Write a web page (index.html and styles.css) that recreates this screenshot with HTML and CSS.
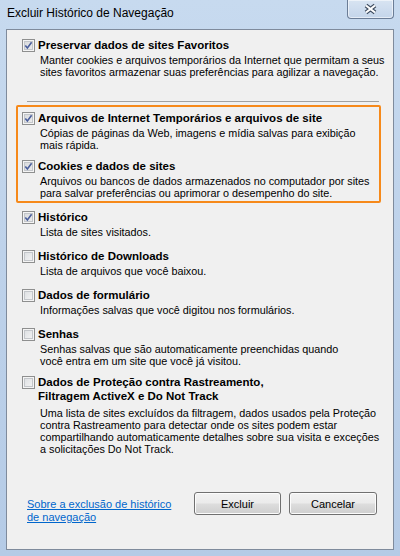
FILE: index.html
```html
<!DOCTYPE html>
<html lang="pt-BR">
<head>
    <meta charset="UTF-8">
    <meta name="viewport" content="width=device-width, initial-scale=1.0">
    <title>Excluir Histórico de Navegação</title>
    <link rel="stylesheet" href="styles.css">
</head>
<body>
    <div class="window">
        <div class="titlebar">
            <span class="caption">Excluir Histórico de Navegação</span>
            <div class="close-btn" role="button" aria-label="Fechar">
                <svg width="15" height="12" viewBox="0 0 15 12">
                    <path d="M3 2.5 L12 9.5 M12 2.5 L3 9.5" stroke="#3f4d61" stroke-width="4.2" fill="none"/>
                    <path d="M3 2.5 L12 9.5 M12 2.5 L3 9.5" stroke="#ffffff" stroke-width="2.2" fill="none"/>
                </svg>
            </div>
        </div>
        <div class="client">
            <div class="options">
                <div class="item">
                    <span class="check checked"><svg width="11" height="11" viewBox="0 0 11 11"><path d="M2.3 5.4 L4.4 8 L8.6 2.3" stroke="#4b5f9c" stroke-width="1.6" fill="none"/></svg></span>
                    <div class="label">
                        <div class="title">Preservar dados de sites Favoritos</div>
                        <div class="desc">Manter cookies e arquivos temporários da Internet que permitam a seus<br>sites favoritos armazenar suas preferências para agilizar a navegação.</div>
                    </div>
                </div>
                <hr class="sep">
                <div class="highlight">
                    <div class="item item-pair">
                        <span class="check checked"><svg width="11" height="11" viewBox="0 0 11 11"><path d="M2.3 5.4 L4.4 8 L8.6 2.3" stroke="#4b5f9c" stroke-width="1.6" fill="none"/></svg></span>
                        <div class="label">
                            <div class="title">Arquivos de Internet Temporários e arquivos de site</div>
                            <div class="desc">Cópias de páginas da Web, imagens e mídia salvas para exibição<br>mais rápida.</div>
                        </div>
                    </div>
                    <div class="item item-last">
                        <span class="check checked"><svg width="11" height="11" viewBox="0 0 11 11"><path d="M2.3 5.4 L4.4 8 L8.6 2.3" stroke="#4b5f9c" stroke-width="1.6" fill="none"/></svg></span>
                        <div class="label">
                            <div class="title">Cookies e dados de sites</div>
                            <div class="desc">Arquivos ou bancos de dados armazenados no computador por sites<br>para salvar preferências ou aprimorar o desempenho do site.</div>
                        </div>
                    </div>
                </div>
                <div class="item">
                    <span class="check checked"><svg width="11" height="11" viewBox="0 0 11 11"><path d="M2.3 5.4 L4.4 8 L8.6 2.3" stroke="#4b5f9c" stroke-width="1.6" fill="none"/></svg></span>
                    <div class="label">
                        <div class="title">Histórico</div>
                        <div class="desc">Lista de sites visitados.</div>
                    </div>
                </div>
                <div class="item">
                    <span class="check"></span>
                    <div class="label">
                        <div class="title">Histórico de Downloads</div>
                        <div class="desc">Lista de arquivos que você baixou.</div>
                    </div>
                </div>
                <div class="item">
                    <span class="check"></span>
                    <div class="label">
                        <div class="title">Dados de formulário</div>
                        <div class="desc">Informações salvas que você digitou nos formulários.</div>
                    </div>
                </div>
                <div class="item item-pair">
                    <span class="check"></span>
                    <div class="label">
                        <div class="title">Senhas</div>
                        <div class="desc">Senhas salvas que são automaticamente preenchidas quando<br>você entra em um site que você já visitou.</div>
                    </div>
                </div>
                <div class="item item-last">
                    <span class="check"></span>
                    <div class="label">
                        <div class="title">Dados de Proteção contra Rastreamento,<br>Filtragem ActiveX e Do Not Track</div>
                        <div class="desc desc-far">Uma lista de sites excluídos da filtragem, dados usados pela Proteção<br>contra Rastreamento para detectar onde os sites podem estar<br>compartilhando automaticamente detalhes sobre sua visita e exceções<br>a solicitações Do Not Track.</div>
                    </div>
                </div>
            </div>
            <div class="footer">
                <a class="help-link" href="#">Sobre a exclusão de histórico<br>de navegação</a>
                <div class="buttons">
                    <button class="btn btn-ok">Excluir</button>
                    <button class="btn btn-cancel">Cancelar</button>
                </div>
            </div>
        </div>
    </div>
</body>
</html>
```

FILE: styles.css
```css
* {
    box-sizing: border-box;
}
body {
    margin: 0;
    padding: 0;
    font-family: "Liberation Sans", Arial, sans-serif;
    font-size: 11px;
    color: #000;
}
.window {
    width: 400px;
    height: 556px;
    display: flex;
    flex-direction: column;
    background: linear-gradient(180deg, #c7daef 0%, #bed2ea 45%, #b5cbe6 100%);
}
.titlebar {
    height: 29px;
    flex-shrink: 0;
    display: flex;
    justify-content: space-between;
    align-items: flex-start;
}
.caption {
    font-size: 12px;
    line-height: 16px;
    padding: 5px 0 0 7px;
}
.close-btn {
    width: 47px;
    height: 19px;
    margin-right: 6px;
    border: 1px solid #6b7d96;
    border-top: none;
    border-radius: 0 0 4px 4px;
    background: linear-gradient(180deg, #d8e4f2 0%, #c4d5ea 100%);
    box-shadow: inset 0 0 0 1px rgba(255, 255, 255, 0.55);
    display: flex;
    align-items: center;
    justify-content: center;
}
.client {
    flex: 1;
    margin: 0 6px 6px 6px;
    border: 1px solid #7f8b9c;
    background: #f0f0f0;
    display: flex;
    flex-direction: column;
}
.options {
    flex: 1;
    padding: 8px 0 0 15px;
}
.item {
    display: flex;
    align-items: flex-start;
    margin-bottom: 11px;
}
.item-pair {
    margin-bottom: 8px;
}
.item-last {
    margin-bottom: 0;
}
.check {
    width: 13px;
    height: 13px;
    flex-shrink: 0;
    margin: 1px 3px 0 0;
    border: 1px solid #8e8f8f;
    background: linear-gradient(135deg, #d9dcdf 0%, #f7f7f7 100%);
    box-shadow: inset 0 0 0 1px #f4f4f4, inset 0 0 0 2px #c3c6ca;
    display: flex;
}
.check.checked {
    background: linear-gradient(135deg, #d6d8db 0%, #eeeeee 100%);
}
.title {
    font-weight: bold;
    font-size: 11.5px;
    line-height: 14px;
}
.desc {
    font-size: 10.8px;
    line-height: 12px;
    margin-top: 2px;
    padding-left: 2px;
}
.desc-far {
    margin-top: 4px;
}
.sep {
    border: none;
    border-top: 1px solid #a0a0a0;
    height: 0;
    margin: 23px 14px 3px 5px;
}
.highlight {
    margin: 0 12px 7px -6px;
    padding: 4px 0 2px 4px;
    border: 2px solid #f6891a;
    border-radius: 2px;
}
.footer {
    display: flex;
    justify-content: space-between;
    align-items: flex-start;
    padding: 0 16px 25px 20px;
}
.help-link {
    margin-top: 6px;
    line-height: 13px;
    color: #0066cc;
    text-decoration: underline;
}
.buttons {
    display: flex;
    gap: 8px;
}
.btn {
    height: 23px;
    padding: 0;
    font-family: inherit;
    font-size: 11px;
    color: #000;
    border: 1px solid #707070;
    border-radius: 3px;
    background: linear-gradient(180deg, #f2f2f2 0%, #ebebeb 48%, #dddddd 52%, #cfcfcf 100%);
    box-shadow: inset 0 0 0 1px #fcfcfc;
}
.btn-ok {
    width: 87px;
}
.btn-cancel {
    width: 88px;
}
```
